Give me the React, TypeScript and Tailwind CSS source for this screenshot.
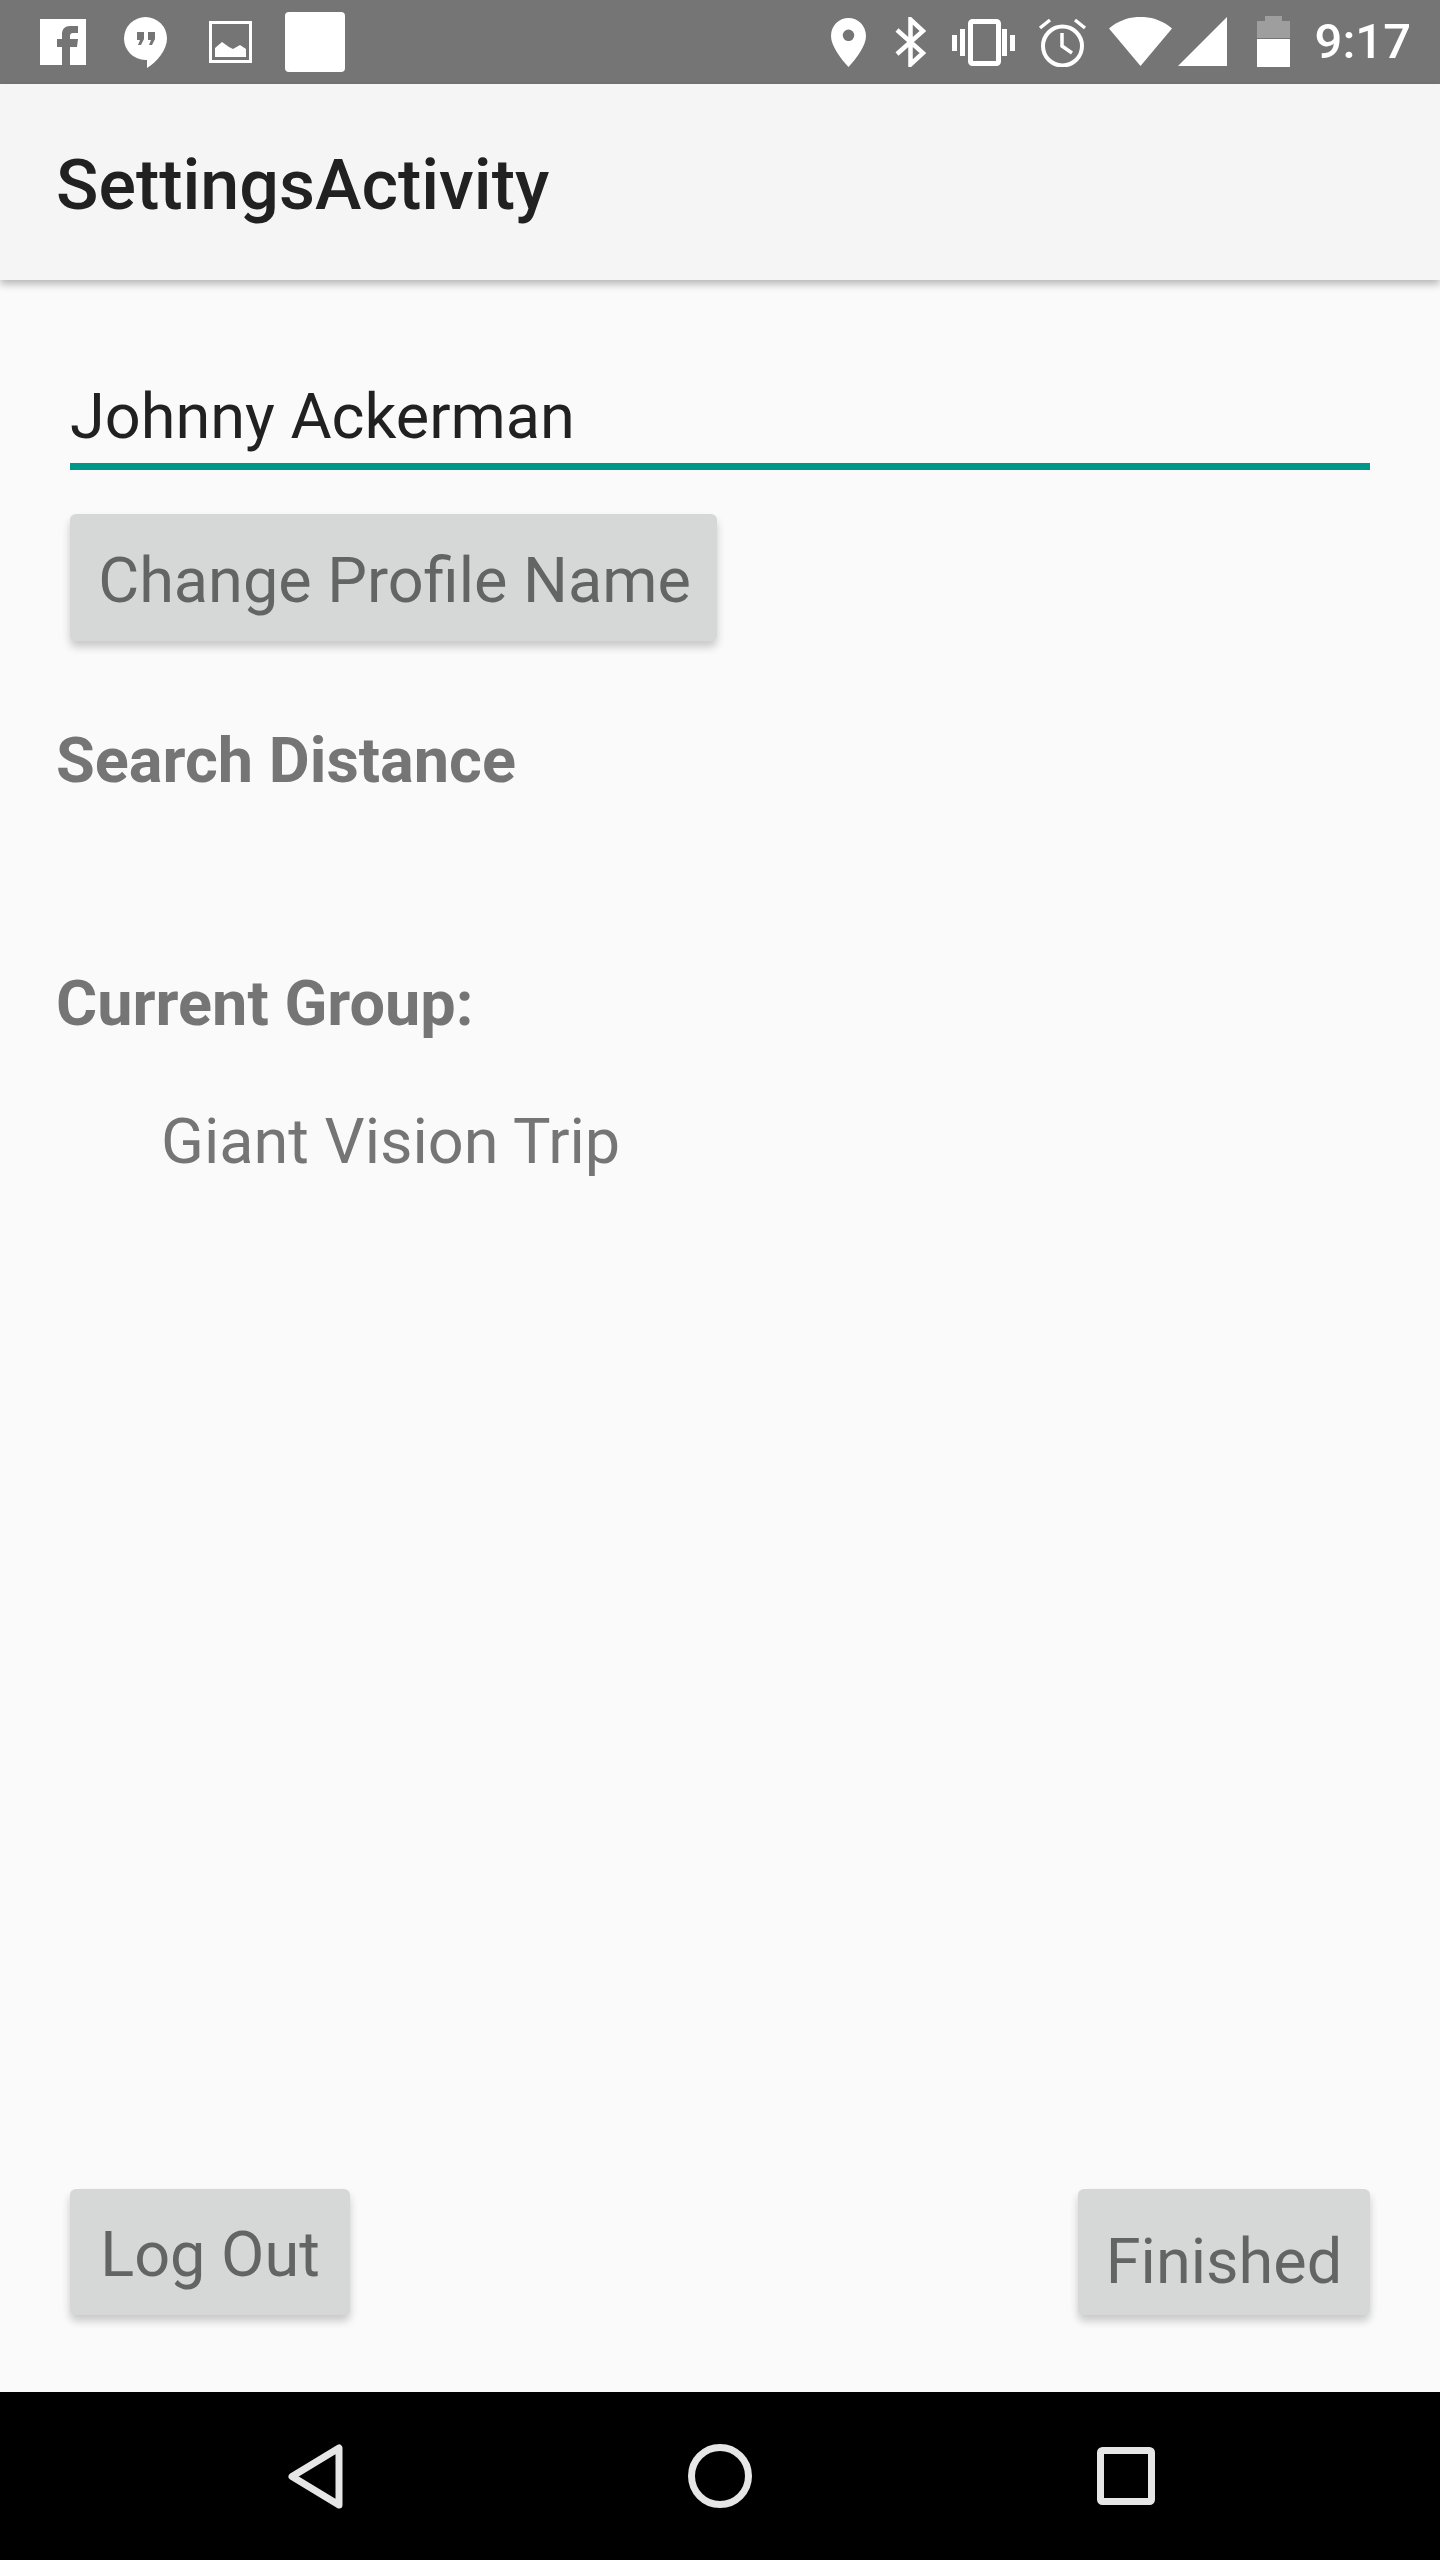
const labelClass = "h-[84px] text-[63px] leading-[84px] text-[#757575]";

function StatusBar() {
  return (
    <div className="flex h-[84px] shrink-0 items-start bg-[#757575] text-white">
      {/* Notification icons */}
      <svg className="ml-[40px] mt-[19px]" width="46" height="46" viewBox="0 0 46 46">
        <rect width="46" height="46" fill="#fff" />
        <path d="M22 46V28h-5v-8h5v-5c0-5 3-8 8-8h8v7h-5c-2 0-3 1-3 3v3h8l-1 8h-7v18z" fill="#757575" />
      </svg>
      <svg className="ml-[38px] mt-[17px]" width="43" height="51" viewBox="0 0 43 51">
        <path d="M21.5 0A21.5 21.5 0 0 1 43 21.5C43 33 33 45 23 51V43H21.5A21.5 21.5 0 0 1 21.5 0Z" fill="#fff" />
        <path d="M13 15h7v7l-3 6h-3l2-5h-3zM24 15h7v7l-3 6h-3l2-5h-3z" fill="#757575" />
      </svg>
      <svg className="ml-[42px] mt-[21px]" width="43" height="42" viewBox="0 0 43 42">
        <rect x="1.5" y="1.5" width="40" height="39" fill="none" stroke="#fff" strokeWidth="3" />
        <path d="M6 36V27l7-6 7 5 4 2 7-4 6 4v8z" fill="#fff" />
      </svg>
      <div className="ml-[33px] mt-[12px] h-[60px] w-[60px] rounded-[4px] bg-white" />

      {/* System icons */}
      <svg className="ml-auto mt-[18px]" width="35" height="49" viewBox="0 0 35 49">
        <path
          fillRule="evenodd"
          d="M17.5 0C8 0 0 7.500 0 18C0 28 10 41 17.500 49C25 41 35 28 35 18C35 7.500 27 0 17.500 0ZM17.500 11.500A5.800 5.800 0 1 1 17.500 23.100A5.800 5.800 0 1 1 17.500 11.500Z"
          fill="#fff"
        />
      </svg>
      <svg className="ml-[29px] mt-[17px]" width="31" height="50" viewBox="0 0 31 50">
        <path d="M2 13L28 36L15.500 47.500V2.500L28 14L2 37" fill="none" stroke="#fff" strokeWidth="4.500" />
      </svg>
      <svg className="ml-[26px] mt-[19px]" width="63" height="47" viewBox="0 0 63 47">
        <rect x="18.500" y="2.500" width="28" height="42" rx="2" fill="none" stroke="#fff" strokeWidth="5" />
        <path d="M0 16h5v16H0zM8 10h5v27H8zM50 10h5v27h-5zM58 16h5v16h-5z" fill="#fff" />
      </svg>
      <svg className="ml-[23px] mt-[18px]" width="49" height="49" viewBox="0 0 49 49">
        <circle cx="24.500" cy="28" r="19.500" fill="none" stroke="#fff" strokeWidth="4" />
        <path d="M24 15V28L34 35M2 10L12 2M47 10L37 2" fill="none" stroke="#fff" strokeWidth="3.500" />
      </svg>
      <svg className="ml-[22px] mt-[17px]" width="63" height="49" viewBox="0 0 63 49">
        <path d="M0 11.500C18 -4 45 -4 63 11.500L31.500 49Z" fill="#fff" />
      </svg>
      <svg className="ml-[6px] mt-[17px]" width="49" height="49" viewBox="0 0 49 49">
        <path d="M49 0V49H0Z" fill="#fff" />
      </svg>
      <svg className="ml-[30px] mt-[16px]" width="33" height="51" viewBox="0 0 33 51">
        <path d="M8 0h17v5h8v17H0V5h8z" fill="#fff" fillOpacity="0.3" />
        <rect y="23" width="33" height="28" fill="#fff" />
      </svg>
      <span className="ml-[25px] mr-[29px] text-[49px] font-medium leading-[84px]">9:17</span>
    </div>
  );
}

function ActionButton({ label, className }: { label: string; className: string }) {
  return (
    <button
      className={`flex items-center justify-center rounded-[6px] bg-[#d6d8d7] text-[63px] text-[#636564] shadow-[0_6px_8px_rgba(0,0,0,0.2)] ${className}`}
    >
      {label}
    </button>
  );
}

function NavBar() {
  return (
    <div className="flex h-[168px] shrink-0 items-center bg-black">
      <svg className="ml-[288px]" width="55" height="65" viewBox="0 0 55 65">
        <path d="M51 4V61L4 32.500Z" fill="none" stroke="#e6e6e6" strokeWidth="7" strokeLinejoin="round" />
      </svg>
      <svg className="ml-[345px]" width="64" height="64" viewBox="0 0 64 64">
        <circle cx="32" cy="32" r="28.500" fill="none" stroke="#e6e6e6" strokeWidth="7" />
      </svg>
      <svg className="ml-[345px]" width="58" height="58" viewBox="0 0 58 58">
        <rect x="3.500" y="3.500" width="51" height="51" rx="2" fill="none" stroke="#e6e6e6" strokeWidth="7" />
      </svg>
    </div>
  );
}

export default function App() {
  return (
    <div className="flex h-[2560px] w-[1440px] flex-col overflow-hidden bg-[#fafafa] font-['Roboto',sans-serif]">
      <StatusBar />

      {/* Toolbar */}
      <div className="relative z-10 flex h-[196px] shrink-0 items-center bg-[#f5f5f5] pl-[56px] pt-[6px] shadow-[0_4px_8px_rgba(0,0,0,0.28)]">
        <span className="text-[70px] font-medium text-[#212121]">SettingsActivity</span>
      </div>

      {/* Form */}
      <div className="flex flex-1 flex-col">
        <div className="ml-[70px] mr-[70px] mt-[95px]">
          <div className="h-[84px] text-[63px] leading-[84px] text-[#212121]">Johnny Ackerman</div>
          <div className="mt-[4px] h-[7px] bg-[#009688]" />
        </div>

        <ActionButton label="Change Profile Name" className="ml-[70px] mt-[44px] h-[127px] w-[647px] pl-[2px] pt-[8px]" />

        <div className={`ml-[56px] mt-[78px] font-bold ${labelClass}`}>Search Distance</div>
        <div className={`ml-[56px] mt-[159px] font-bold ${labelClass}`}>Current Group:</div>
        <div className={`ml-[161px] mt-[54px] ${labelClass}`}>Giant Vision Trip</div>

        <div className="mt-auto flex items-end justify-between px-[70px] pb-[77px]">
          <ActionButton label="Log Out" className="h-[126px] w-[280px] pt-[7px]" />
          <ActionButton label="Finished" className="h-[126px] w-[292px] pt-[21px]" />
        </div>
      </div>

      <NavBar />
    </div>
  );
}
